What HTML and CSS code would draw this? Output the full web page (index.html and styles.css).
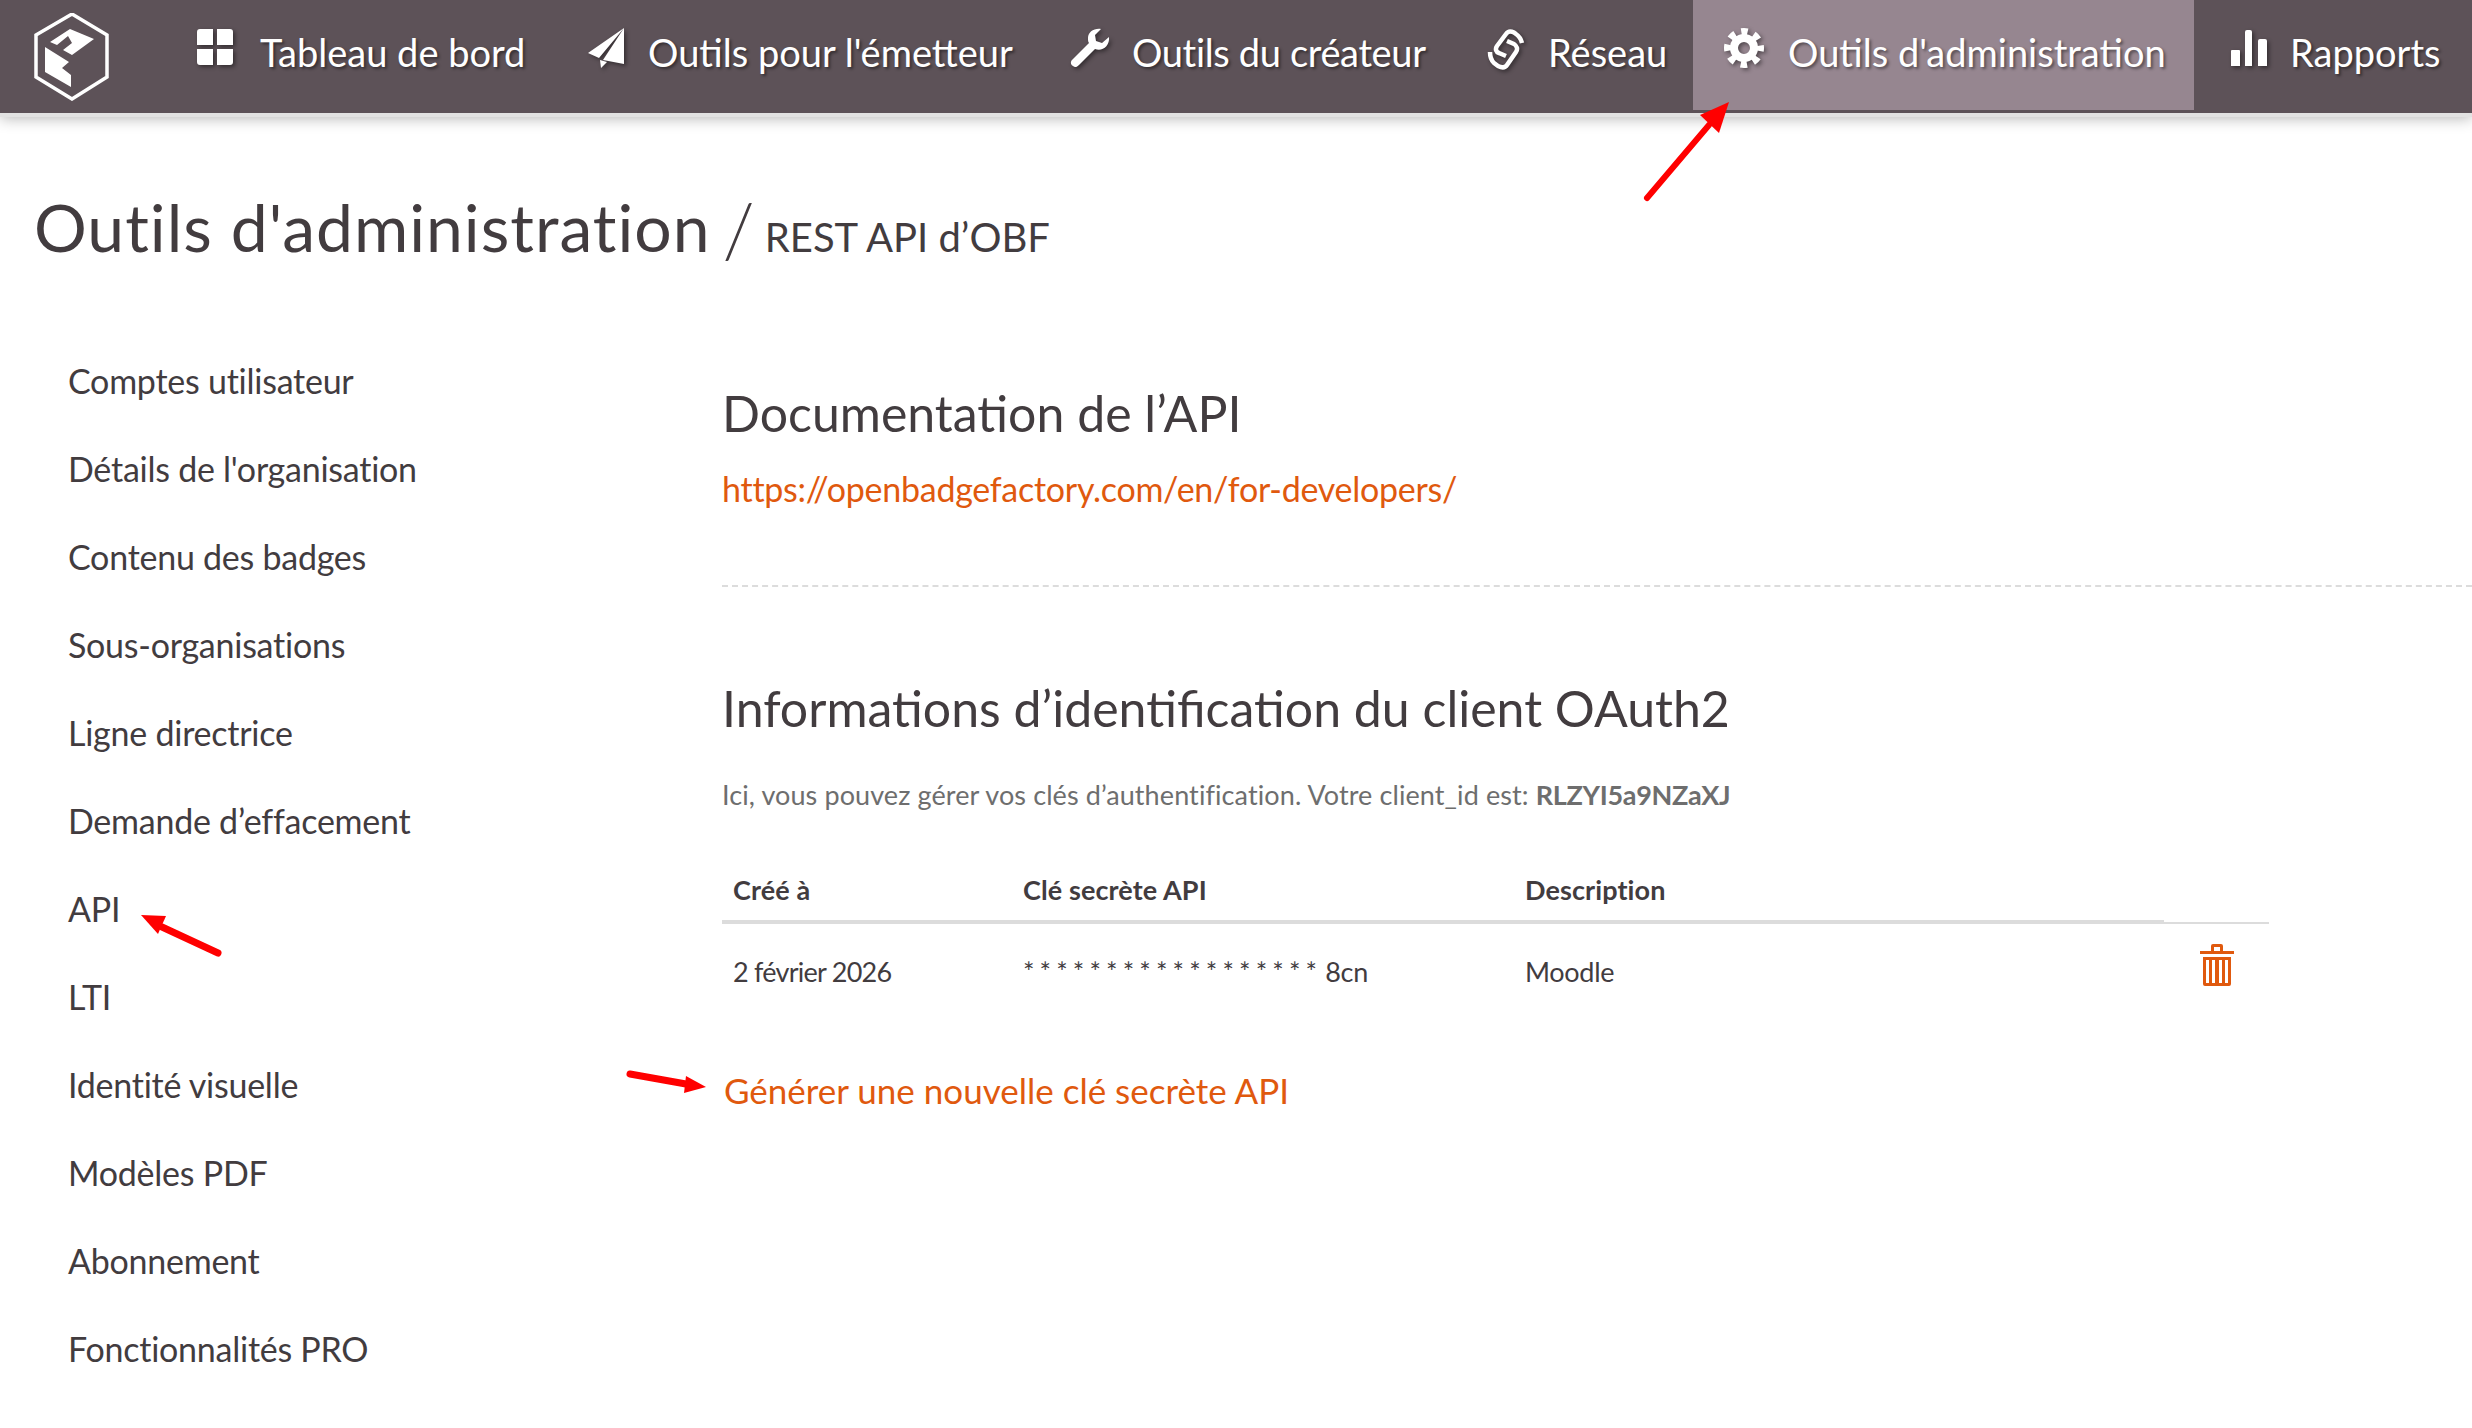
FILE: index.html
```html
<!DOCTYPE html>
<html lang="fr">
<head>
<meta charset="utf-8">
<title>Outils d'administration</title>
<link rel="stylesheet" href="styles.css">
</head>
<body>
<header class="topbar">
  <a class="logo" href="#"><svg width="76" height="88" viewBox="0 0 76 88"><path d="M38 1 73 22V64L38 86 2 64V22Z" fill="none" stroke="#fff" stroke-width="3.5"/><path d="M16 29 36 16 60 26 38 42 29 37 38 30 34 23 23 32Z M11 34 35 49 28 55 37 62V74L11 59Z" fill="#fff"/></svg></a>
  <nav class="menu">
    <a class="item i1" href="#"><svg class="ic" viewBox="0 0 36 36"><path d="M0 3a3 3 0 0 1 3-3h13v16H0ZM20 0h13a3 3 0 0 1 3 3v13H20ZM0 20h16v16H3a3 3 0 0 1-3-3ZM20 20h16v13a3 3 0 0 1-3 3H20Z"/></svg><span>Tableau de bord</span></a>
    <a class="item i2" href="#"><svg class="ic" viewBox="0 0 40 40"><path d="M38 0 2 25 13 30Z M38 0 17 32 38 36Z M14 32 15 40 21 34Z"/></svg><span>Outils pour l'émetteur</span></a>
    <a class="item i3" href="#"><svg class="ic" viewBox="0 0 40 40"><path d="M39 9 32 15 26 13 25 7 31 1C24 0 18 4 18 10 18 12 18 14 19 15L2 32C0 34 1 37 3 38 5 40 7 39 9 37L25 21C32 24 40 18 39 9Z"/></svg><span>Outils du créateur</span></a>
    <a class="item i4" href="#"><svg class="ic" viewBox="0 0 40 44"><g fill="none" stroke="#fff" stroke-width="4.5" stroke-linejoin="round"><path d="M36 15C35 11 33 8 30 6L28 4.5C25 3 22 3 20 6L11 18C9 21 10 24 13 25L20 28"/><path d="M4 24C4 29 5 32 8 35L12 38C16 40 19 40 21 37L30 24C32 21 31 18 28 16L21 13"/></g></svg><span>Réseau</span></a>
    <a class="item active i5" href="#"><svg class="ic" viewBox="0 0 40 40"><g fill="none" stroke="#fff"><circle cx="20" cy="20" r="10" stroke-width="8"/><circle cx="20" cy="20" r="16" stroke-width="8" stroke-dasharray="6.28 6.28" stroke-dashoffset="3.14"/></g></svg><span>Outils d'administration</span></a>
    <a class="item i6" href="#"><svg class="ic" viewBox="0 0 36 36"><path d="M0 21a1 1 0 0 1 1-1h7a1 1 0 0 1 1 1v15H0ZM14 2a2 2 0 0 1 2-2h3a2 2 0 0 1 2 2v34h-7ZM27 11a2 2 0 0 1 2-2h5a2 2 0 0 1 2 2v25h-9Z"/></svg><span>Rapports</span></a>
  </nav>
</header>
<div class="title-row">
  <h1>Outils d'administration<span class="slash">/</span><small>REST API d’OBF</small></h1>
</div>
<div class="layout">
  <aside class="side">
    <a href="#">Comptes utilisateur</a>
    <a href="#">Détails de l'organisation</a>
    <a href="#">Contenu des badges</a>
    <a href="#">Sous-organisations</a>
    <a href="#">Ligne directrice</a>
    <a href="#">Demande d’effacement</a>
    <a href="#">API</a>
    <a href="#">LTI</a>
    <a href="#">Identité visuelle</a>
    <a href="#">Modèles PDF</a>
    <a href="#">Abonnement</a>
    <a href="#">Fonctionnalités PRO</a>
  </aside>
  <main class="content">
    <section class="doc">
      <h2>Documentation de l’API</h2>
      <a class="link url" href="#">https://openbadgefactory.com/en/for-developers/</a>
    </section>
    <section class="creds">
      <h2>Informations d’identification du client OAuth2</h2>
      <p class="note">Ici, vous pouvez gérer vos clés d’authentification. Votre client_id est: <b>RLZYI5a9NZaXJ</b></p>
      <div class="table">
        <div class="row head"><div class="c1">Créé à</div><div class="c2">Clé secrète API</div><div class="c3">Description</div><div class="c4"></div></div>
        <div class="row body"><div class="c1">2 février 2026</div><div class="c2"><span class="stars">******************</span><span class="tail">8cn</span></div><div class="c3">Moodle</div><div class="c4"><svg width="34" height="42" viewBox="0 0 34 42"><path fill="#e0590e" d="M0 7h34v3H0ZM11 7V2a2 2 0 0 1 2-2h8a2 2 0 0 1 2 2v5h-3V3h-6v4ZM3 13h28v27a2 2 0 0 1-2 2H5a2 2 0 0 1-2-2Zm3 3v23h3V16Zm6 0v23h3V16Zm7 0v23h3V16Zm6 0v23h3V16Z" fill-rule="evenodd"/></svg></div></div>
      </div>
      <a class="link gen" href="#">Générer une nouvelle clé secrète API</a>
    </section>
  </main>
</div>
<svg class="arrow a1" width="100" height="110" viewBox="0 0 100 110"><path d="M5 99 67 26" stroke="#f00" stroke-width="6" stroke-linecap="round"/><path d="M87 3 77 34 58 16Z" fill="#f00"/></svg>
<svg class="arrow a2" width="90" height="50" viewBox="0 0 90 50"><path d="M80 43 24 17" stroke="#f00" stroke-width="7" stroke-linecap="round"/><path d="M3 5 28 6 20 24Z" fill="#f00"/></svg>
<svg class="arrow a3" width="84" height="30" viewBox="0 0 84 30"><path d="M4 8 60 18" stroke="#f00" stroke-width="7" stroke-linecap="round"/><path d="M80 21 58 27 60 10Z" fill="#f00"/></svg>
</body>
</html>
```

FILE: styles.css
```css
* { box-sizing: border-box; }
html, body { margin: 0; padding: 0; background: #fff; }
body {
  position: relative;
  height: 1428px;
  overflow: hidden;
  font-family: "Lato", "Noto Sans", sans-serif;
  color: #423c3f;
}
a { text-decoration: none; color: inherit; }

.topbar {
  display: flex;
  height: 113px;
  background: #5d5258;
  box-shadow: 0 4px 0 #e2e2e2, 0 5px 14px rgba(0,0,0,.3);
  position: relative;
}
.logo { width: 179px; padding: 13px 0 0 34px; flex: none; }
.logo svg { display: block; }
.menu { display: flex; height: 110px; }
.item {
  display: flex;
  align-items: flex-start;
  color: #fff;
  font-size: 38px;
  letter-spacing: 0;
  text-shadow: 2px 2px 3px rgba(0,0,0,.45);
  padding-top: 25px;
  line-height: 54px;
  white-space: nowrap;
}
.ic { fill: #fff; filter: drop-shadow(2px 2px 2px rgba(0,0,0,.45)); flex: none; margin-top: 3px; }
.i1 { width: 398px; padding-left: 18px; }
.i1 .ic { width: 36px; height: 36px; margin-right: 27px; margin-top: 4px; }
.i2 { width: 493px; padding-left: 9px; }
.i2 .ic { width: 40px; height: 40px; margin-right: 22px; }
.i3 { width: 416px; letter-spacing: -.35px; }
.i3 .ic { width: 40px; height: 40px; margin-right: 22px; }
.i4 { width: 207px; }
.i4 .ic { width: 40px; height: 44px; margin-right: 22px; }
.i5 { width: 501px; padding-left: 31px; background: #968690; }
.i5 .ic { width: 40px; height: 40px; margin-right: 24px; }
.i6 { padding-left: 37px; }
.i6 .ic { width: 36px; height: 36px; margin-right: 23px; margin-top: 5px; }

.title-row { padding: 69px 0 0 34px; }
h1 { margin: 0; font-size: 66px; line-height: 90px; font-weight: 400; letter-spacing: 1px; white-space: nowrap; }
h1 small { font-size: 40px; letter-spacing: 0; }
.slash { font-size: 74px; font-weight: 300; line-height: 0; vertical-align: -6px; margin: 0 9px 0 12px; }

.layout { display: flex; padding-top: 55px; }
.side { width: 722px; padding-left: 68px; flex: none; display: flex; flex-direction: column; }
.side a { height: 88px; font-size: 34px; line-height: 88px; letter-spacing: -.25px; }
.content { flex: 1; }

h2 { margin: 0; font-weight: 400; font-size: 50px; line-height: 70px; letter-spacing: 0; white-space: nowrap; }
.doc { height: 250px; border-bottom: 2px dashed #dcdcdc; padding-top: 41px; }
.link { color: #e0590e; }
.url { display: block; font-size: 34px; line-height: 48px; letter-spacing: -.27px; margin-top: 17px; }
.creds { padding-top: 86px; }
.note { margin: 32px 0 0; font-size: 27px; line-height: 40px; color: #6e6e6e; letter-spacing: .1px; white-space: nowrap; }
.note b { letter-spacing: -.3px; }
.table { margin-top: 52px; width: 1547px; }
.row { display: flex; padding-left: 11px; }
.c1 { width: 290px; }
.c2 { width: 502px; }
.c3 { flex: 1; }
.c4 { width: 108px; flex: none; }
.head { height: 57px; font-weight: 700; font-size: 27px; line-height: 46px; letter-spacing: .1px; border-bottom: 2px solid #dcdcdc; position: relative; }
.head::after { content: ""; position: absolute; left: 0; bottom: -2px; width: 1442px; height: 4px; background: #dcdcdc; }
.body { height: 98px; font-size: 27px; line-height: 46px; letter-spacing: -.3px; padding-top: 25px; position: relative; }
.body .c1 { letter-spacing: -.75px; }
.stars { letter-spacing: 5.15px; }
.tail { margin-left: 3px; }
.body .c4 svg { display: block; margin-top: -5px; margin-left: 39px; }
.gen { display: block; font-size: 35px; line-height: 50px; letter-spacing: 0; margin: 43px 0 0 2px; }

.arrow { position: absolute; }
.a1 { left: 1642px; top: 99px; }
.a2 { left: 138px; top: 910px; }
.a3 { left: 626px; top: 1066px; }
```
